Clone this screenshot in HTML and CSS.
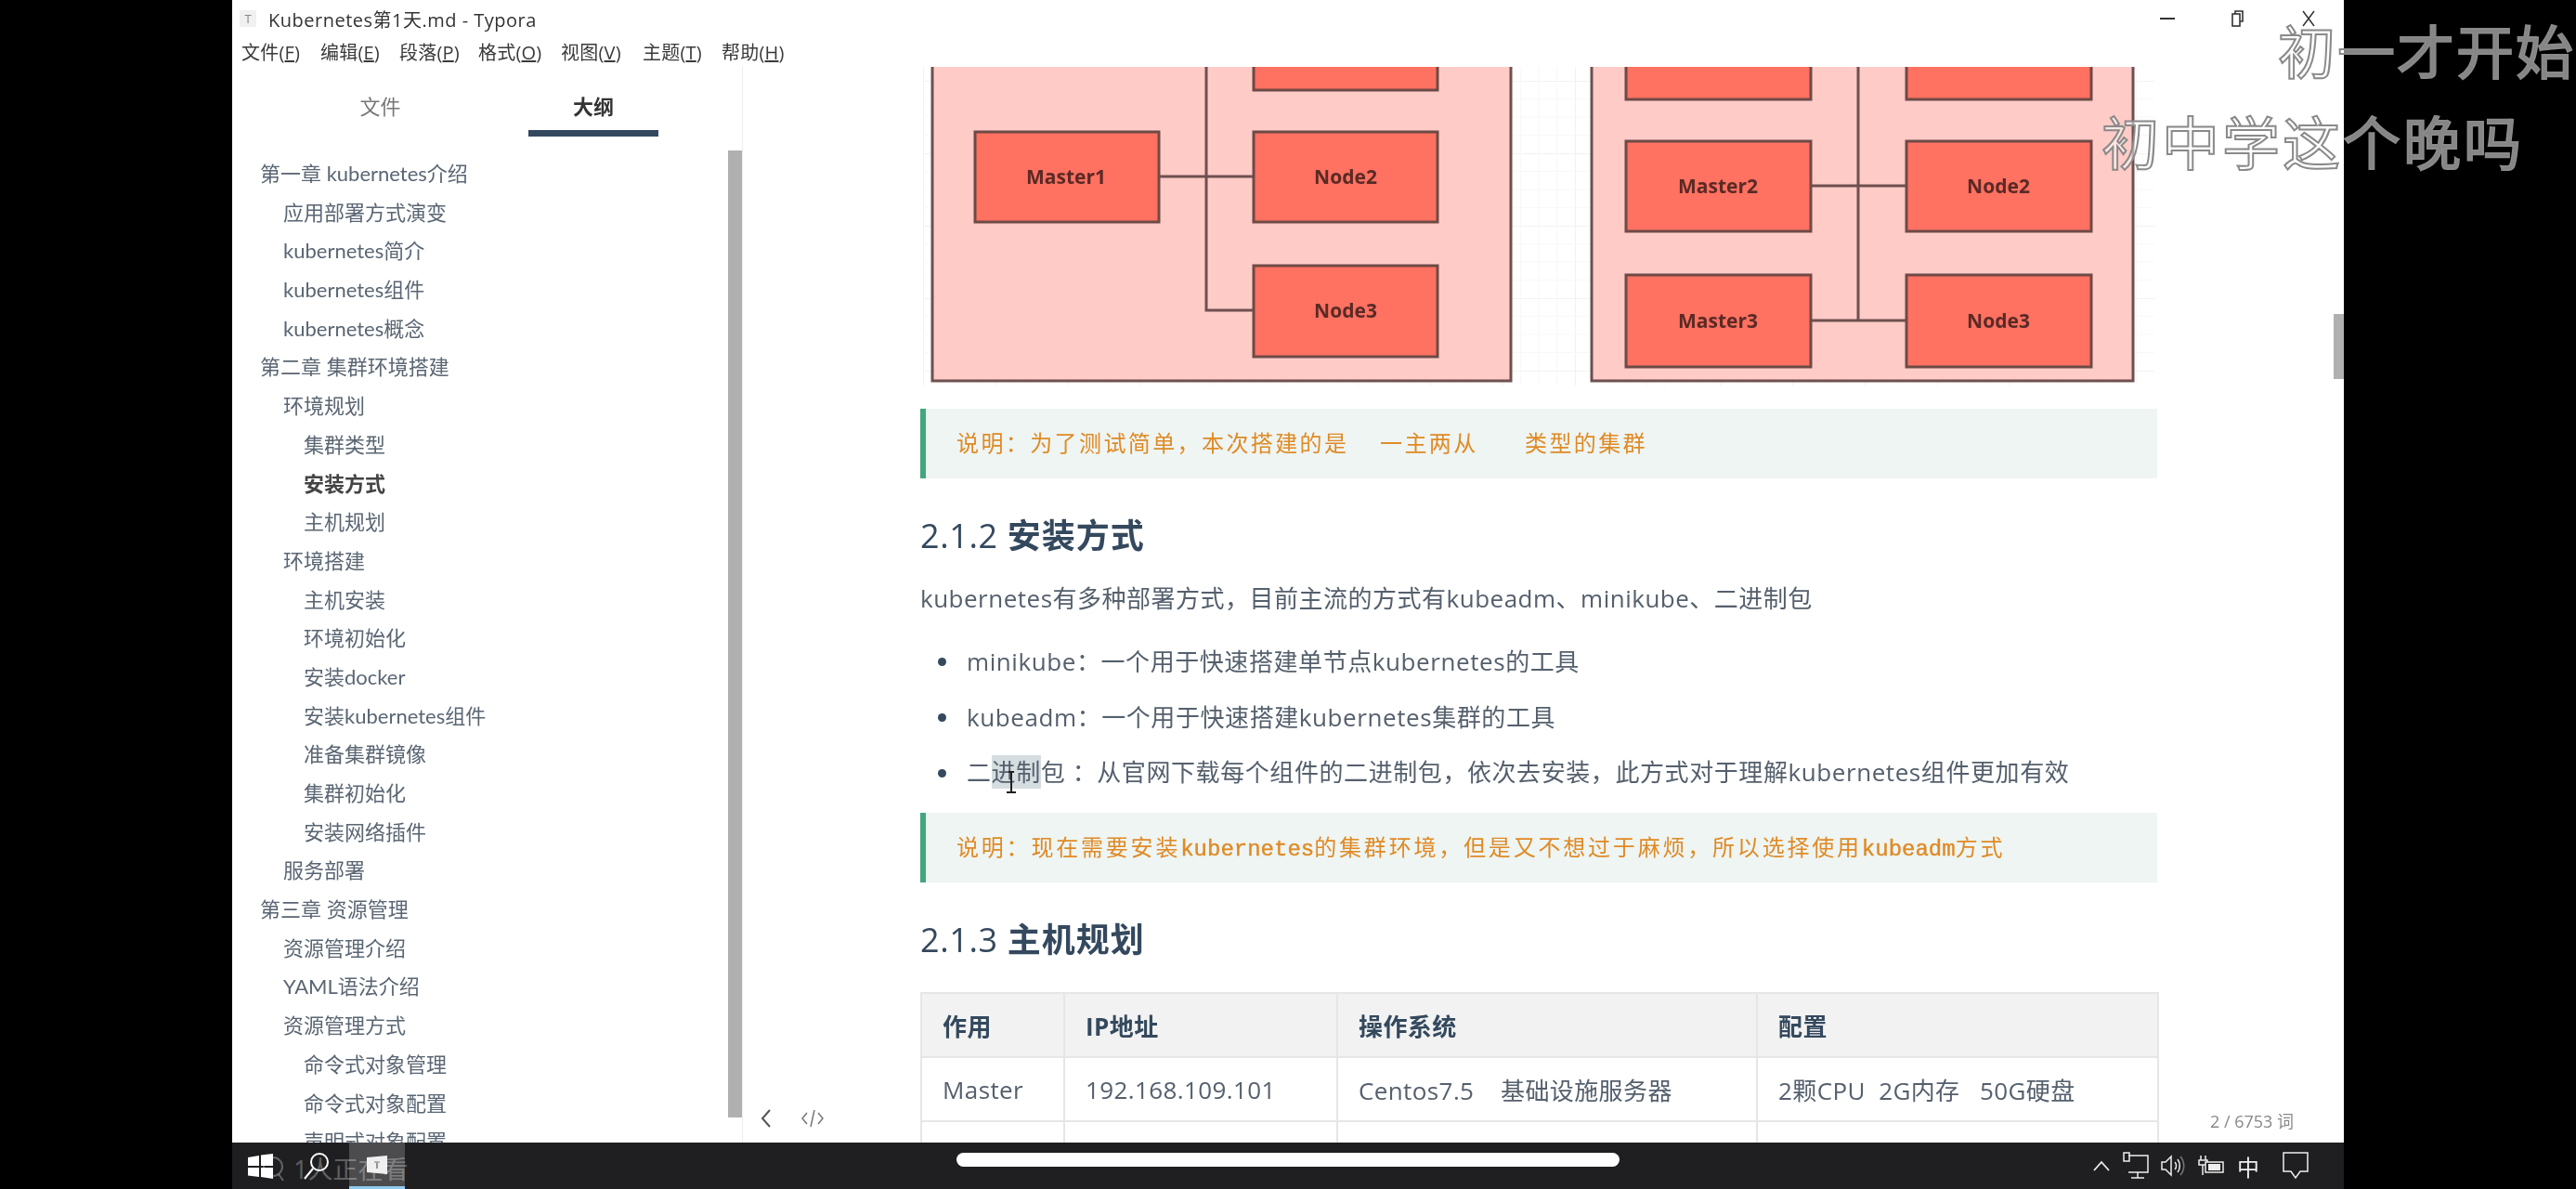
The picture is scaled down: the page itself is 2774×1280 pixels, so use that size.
FILE: index.html
```html
<!DOCTYPE html>
<html lang="zh-CN">
<head>
    <meta charset="UTF-8">
    <title>Kubernetes第1天.md - Typora</title>
    <link rel="stylesheet" href="styles.css">
</head>
<body>

<div class="screen">
    <div class="window">
        <div class="titlebar">
            <span class="app-icon">T</span>
            <span class="app-title">Kubernetes第1天.md - Typora</span>
            <div class="win-controls">
                <svg width="18" height="18" viewBox="0 0 18 18"><path d="M1 9h16" stroke="#333" stroke-width="2"/></svg>
                <svg width="18" height="18" viewBox="0 0 18 18" fill="none" stroke="#333" stroke-width="1.6"><path d="M6 4V1h8v11h-3"/><rect x="3" y="4" width="8" height="13"/></svg>
                <svg width="18" height="18" viewBox="0 0 18 18"><path d="M3 1l12 16M15 1L3 17" stroke="#333" stroke-width="1.5"/></svg>
            </div>
        </div>
        <div class="menubar">
            <span>文件(<u>F</u>)</span>
            <span>编辑(<u>E</u>)</span>
            <span>段落(<u>P</u>)</span>
            <span>格式(<u>O</u>)</span>
            <span class="menu-wide">视图(<u>V</u>)</span>
            <span>主题(<u>T</u>)</span>
            <span>帮助(<u>H</u>)</span>
        </div>

        <div class="main">
            <aside class="sidebar">
                <div class="tabs">
                    <div class="tab">文件</div>
                    <div class="tab tab-active">大纲</div>
                </div>
                <div class="outline">
                    <div class="l1">第一章 kubernetes介绍</div>
                    <div class="l2">应用部署方式演变</div>
                    <div class="l2">kubernetes简介</div>
                    <div class="l2">kubernetes组件</div>
                    <div class="l2">kubernetes概念</div>
                    <div class="l1">第二章 集群环境搭建</div>
                    <div class="l2">环境规划</div>
                    <div class="l3">集群类型</div>
                    <div class="l3 current">安装方式</div>
                    <div class="l3">主机规划</div>
                    <div class="l2">环境搭建</div>
                    <div class="l3">主机安装</div>
                    <div class="l3">环境初始化</div>
                    <div class="l3">安装docker</div>
                    <div class="l3">安装kubernetes组件</div>
                    <div class="l3">准备集群镜像</div>
                    <div class="l3">集群初始化</div>
                    <div class="l3">安装网络插件</div>
                    <div class="l2">服务部署</div>
                    <div class="l1">第三章 资源管理</div>
                    <div class="l2">资源管理介绍</div>
                    <div class="l2">YAML语法介绍</div>
                    <div class="l2">资源管理方式</div>
                    <div class="l3">命令式对象管理</div>
                    <div class="l3">命令式对象配置</div>
                    <div class="l3">声明式对象配置</div>
                </div>
                <div class="side-scroll"></div>
            </aside>

            <div class="content">
                <svg class="diagram" width="1332" height="345" viewBox="991 72 1332 345">
                    <defs>
                        <pattern id="grid" x="994" y="9" width="78" height="78" patternUnits="userSpaceOnUse">
                            <path d="M78 0H0V78" fill="none" stroke="#eeeeee" stroke-width="1.5"/>
                            <path d="M19.5 0V78M39 0V78M58.5 0V78M0 19.5H78M0 39H78M0 58.5H78" fill="none" stroke="#f8f8f8" stroke-width="1"/>
                        </pattern>
                    </defs>
                    <rect x="994" y="72" width="1326" height="343" fill="url(#grid)"/>

                    <g class="d-frame">
                        <rect x="1004" y="60" width="623" height="350"/>
                        <rect x="1714" y="60" width="583" height="350"/>
                    </g>
                    <g class="d-line">
                        <path d="M1299 60V334H1350M1248 190H1350"/>
                        <path d="M2001 60V345M1950 200H2053M1950 345H2053"/>
                    </g>
                    <g class="d-box">
                        <rect x="1350" y="40" width="198" height="57"/>
                        <rect x="1050" y="142" width="198" height="97"/>
                        <rect x="1350" y="142" width="198" height="97"/>
                        <rect x="1350" y="286" width="198" height="98"/>
                        <rect x="1751" y="40" width="199" height="67"/>
                        <rect x="2053" y="40" width="199" height="67"/>
                        <rect x="1751" y="152" width="199" height="97"/>
                        <rect x="2053" y="152" width="199" height="97"/>
                        <rect x="1751" y="296" width="199" height="99"/>
                        <rect x="2053" y="296" width="199" height="99"/>
                    </g>
                    <g class="d-text">
                        <text x="1148" y="198">Master1</text>
                        <text x="1449" y="198">Node2</text>
                        <text x="1449" y="342">Node3</text>
                        <text x="1850" y="208">Master2</text>
                        <text x="2152" y="208">Node2</text>
                        <text x="1850" y="353">Master3</text>
                        <text x="2152" y="353">Node3</text>
                    </g>
                </svg>

                <div class="note">说明：为了测试简单，本次搭建的是  一主两从   类型的集群</div>

                <h3>2.1.2 <b>安装方式</b></h3>
                <p class="para">kubernetes有多种部署方式，目前主流的方式有kubeadm、minikube、二进制包</p>
                <ul class="list">
                    <li>minikube：一个用于快速搭建单节点kubernetes的工具</li>
                    <li>kubeadm：一个用于快速搭建kubernetes集群的工具</li>
                    <li>二<span class="selected">进制</span>包 ：从官网下载每个组件的二进制包，依次去安装，此方式对于理解kubernetes组件更加有效</li>
                </ul>

                <div class="note note-wide">说明：现在需要安装<span class="mono">kubernetes</span>的集群环境，但是又不想过于麻烦，所以选择使用<span class="mono">kubeadm</span>方式</div>

                <h3>2.1.3 <b>主机规划</b></h3>
                <table class="hosts">
                    <colgroup>
                        <col class="c1"><col class="c2"><col class="c3"><col class="c4">
                    </colgroup>
                    <tr><th>作用</th><th>IP地址</th><th>操作系统</th><th>配置</th></tr>
                    <tr><td>Master</td><td>192.168.109.101</td><td>Centos7.5&nbsp;&nbsp;&nbsp; 基础设施服务器</td><td>2颗CPU&nbsp; 2G内存&nbsp;&nbsp; 50G硬盘</td></tr>
                    <tr><td>Node1</td><td>192.168.109.102</td><td>Centos7.5&nbsp;&nbsp;&nbsp; 基础设施服务器</td><td>2颗CPU&nbsp; 2G内存&nbsp;&nbsp; 50G硬盘</td></tr>
                </table>

                <svg class="ibeam" width="14" height="24" viewBox="0 0 14 24"><path d="M7 1V22M2 23h10M4 1h6" stroke="#222" stroke-width="2" fill="none"/></svg>
            </div>

            <div class="main-scroll"></div>
            <div class="foot-icons">
                <svg width="14" height="24" viewBox="0 0 14 24"><path d="M11 3L3 12l8 9" fill="none" stroke="#555" stroke-width="2"/></svg>
                <svg width="26" height="24" viewBox="0 0 26 24" fill="none" stroke="#777" stroke-width="1.5"><path d="M7 6l-5 6 5 6M19 6l5 6-5 6M15 3l-4 18"/></svg>
            </div>
            <div class="wordcount">2 / 6753 词</div>
        </div>

        <div class="taskbar">
            <svg class="win-logo" width="27" height="27" viewBox="0 0 27 27"><path d="M0 4l12-2v11H0zM14 1.600L27 0v13H14zM0 15h12v10L0 23.500zM14 15h13v12l-13-2z" fill="#fff"/></svg>
            <svg class="search" width="28" height="29" viewBox="0 0 28 29" fill="none" stroke="#fff" stroke-width="2"><circle cx="17" cy="10" r="9"/><path d="M10 17L1 28"/></svg>
            <div class="task-btn">
                <svg width="24" height="20" viewBox="0 0 24 20"><path d="M1 2l22-2v20L1 18z" fill="#eeeeee"/><path d="M9 7h6M12 7v7" stroke="#777" stroke-width="1.500"/></svg>
            </div>
            <div class="tray">
                <svg width="20" height="14" viewBox="0 0 20 14"><path d="M2 12l8-9 8 9" fill="none" stroke="#eee" stroke-width="1.800"/></svg>
                <svg width="28" height="30" viewBox="0 0 28 30" fill="none" stroke="#eee" stroke-width="1.500"><path d="M6 4h21v18H6M16 22v6M9 28h14"/><rect x="1" y="1" width="6" height="9"/></svg>
                <svg width="26" height="26" viewBox="0 0 26 26" fill="none" stroke="#eee" stroke-width="1.500"><path d="M1 9h4l6-6v20l-6-6H1zM15 9c2 2 2 6 0 8M18 6c3 4 3 10 0 14"/><path d="M21 3c5 6 5 14 0 20" stroke="#777"/></svg>
                <svg width="30" height="24" viewBox="0 0 30 24" fill="none" stroke="#eee" stroke-width="1.500"><path d="M4 1v5M9 1v5M2 6h9v5H2zM6 11v11"/><rect x="9" y="8" width="19" height="11" fill="#1f1f21"/><rect x="12" y="10" width="13" height="7" fill="#eee" stroke="none"/></svg>
                <span class="ime">中</span>
                <svg width="28" height="30" viewBox="0 0 28 30" fill="none" stroke="#eee" stroke-width="1.500"><path d="M1 1h26v20h-8l-5 7-5-7H1z"/></svg>
            </div>
        </div>
    </div>

    <div class="watching">
        <svg width="24" height="30" viewBox="0 0 24 30" fill="none" stroke="rgba(255,255,255,0.3)" stroke-width="2"><circle cx="12" cy="13" r="10"/><path d="M18 21l5 7"/></svg>
        <span>1人正在看</span>
    </div>
    <div class="pill"></div>
    <div class="barrage barrage-one">初一才开始</div>
    <div class="barrage barrage-two">初中学这个晚吗</div>
</div>

</body>
</html>
```

FILE: styles.css
```css
* { margin: 0; padding: 0; box-sizing: border-box; }
html, body { background: #000; }
body { font-family: 'Open Sans', 'Noto Sans CJK SC', sans-serif; color: #55606d; }

.screen {
    position: relative; width: 2774px; height: 1280px;
    padding-left: 250px; overflow: hidden; background: #000;
}
.window {
    width: 2274px; height: 1280px; display: flex; flex-direction: column;
    background: #fff; filter: blur(0.5px);
}

/* title + menu */
.titlebar { height: 40px; display: flex; align-items: center; padding-left: 8px; color: #333; }
.app-icon {
    width: 18px; height: 18px; margin-right: 13px; background: #f0f0f0; color: #888;
    font-size: 13px; line-height: 18px; text-align: center;
}
.app-title { font-size: 20px; letter-spacing: 0.5px; }
.win-controls { margin-left: auto; display: flex; gap: 58px; padding-right: 29px; }
.menubar { height: 32px; display: flex; gap: 21px; padding-left: 10px; font-size: 20px; line-height: 34px; color: #3a3a3a; }
.menubar span { width: 64px; white-space: nowrap; letter-spacing: 0.2px; }
.menubar .menu-wide { margin-left: 4px; margin-right: 3px; }

.main { position: relative; flex: 1; display: flex; overflow: hidden; }

/* sidebar */
.sidebar {
    position: relative; width: 550px; flex-shrink: 0;
    border-right: 1px solid #eee; overflow: hidden;
}
.tabs { height: 75px; display: flex; }
.tab { width: 319px; padding-top: 26px; text-align: center; font-size: 22px; line-height: 32px; color: #777; }
.tab-active { position: relative; color: #333; font-weight: 700; width: 140px; }
.tab-active::after {
    content: ''; position: absolute; left: 0; right: 0; bottom: 0;
    height: 7px; background: #34495e;
}
.outline { padding-top: 19px; font-family: Lato, 'Noto Sans CJK SC', sans-serif; font-size: 22px; color: #5a6673; }
.outline div { height: 41.7px; line-height: 41.7px; white-space: nowrap; }
.l1 { padding-left: 30px; }
.l2 { padding-left: 55px; }
.l3 { padding-left: 77px; }
.outline .current { font-weight: 700; color: #444; }
.side-scroll { position: absolute; right: 0; top: 90px; width: 15px; height: 1041px; background: #b0b0b0; }

/* editor */
.content { position: relative; flex: 1; padding-left: 191px; width: 1724px; overflow: hidden; }
.content > * { width: 1332px; }
.diagram { display: block; }
.d-frame rect { fill: #ffcbc7; stroke: #6e5050; stroke-width: 3; }
.d-line path { fill: none; stroke: #6e5050; stroke-width: 3; }
.d-box rect { fill: #ff7161; stroke: #6e4a46; stroke-width: 3; }
.d-text text { font-size: 21px; font-weight: 700; fill: #5a2a26; text-anchor: middle; }

.note {
    height: 75px; margin-top: 23px; padding-left: 33px; line-height: 79px;
    background: #eef5f3; border-left: 6px solid #42a77f;
    font-family: 'Liberation Mono', 'Noto Sans CJK SC', monospace;
    font-size: 24px; letter-spacing: 2.4px; color: #e08a25; white-space: pre;
}
.note-wide { letter-spacing: 2.8px; }
.mono { letter-spacing: 0; -webkit-text-stroke: 0.4px #e08a25; }

h3 {
    height: 50px; margin-top: 35px; line-height: 53px;
    font-size: 36px; font-weight: 400; color: #34495e; letter-spacing: 0.6px;
}
h3 b { font-weight: 700; letter-spacing: 1px; }
.para { height: 40px; margin-top: 23px; line-height: 42px; font-size: 26px; letter-spacing: 0.5px; white-space: nowrap; }
.list { margin-top: 29px; list-style: none; font-size: 26px; letter-spacing: 0.58px; }
.list li { position: relative; height: 40px; margin-bottom: 20px; padding-left: 50px; line-height: 40px; white-space: nowrap; }
.list li:last-child { margin-bottom: 0; line-height: 38px; }
.list li::before {
    content: ''; position: absolute; left: 19px; top: 16px;
    width: 9px; height: 9px; border-radius: 50%; background: #34495e;
}
.selected { background: #d5dde0; }
.ibeam { position: absolute; left: 282px; top: 758px; width: 14px; }

.hosts { margin-top: 33px; border-collapse: collapse; table-layout: fixed; font-size: 26px; letter-spacing: 0.4px; }
.hosts .c1 { width: 154px; }
.hosts .c2 { width: 294px; }
.hosts .c3 { width: 452px; }
.hosts .c4 { width: 432px; }
.hosts th, .hosts td {
    height: 69px; padding-left: 22px; text-align: left; white-space: nowrap;
    border: 2px solid #e6e6e6;
}
.hosts th { background: #f2f2f2; color: #34495e; font-weight: 700; }

.main-scroll { position: absolute; right: 0; top: 266px; width: 11px; height: 70px; background: #b0b0b0; }
.foot-icons { position: absolute; left: 568px; top: 1120px; display: flex; gap: 30px; align-items: center; }
.wordcount { position: absolute; left: 2130px; top: 1121px; font-size: 18px; color: #888; }

/* taskbar */
.taskbar { height: 50px; flex-shrink: 0; display: flex; align-items: center; background: #1f1f21; padding-left: 17px; }
.win-logo { margin-right: 33px; }
.search { margin-right: 21px; }
.task-btn {
    width: 60px; height: 50px; display: flex; align-items: center; justify-content: center;
    background: #4c4c4e; border-bottom: 3px solid #8fcbf0;
}
.tray { margin-left: auto; height: 50px; padding-right: 38px; display: flex; align-items: center; gap: 13px; }
.ime { margin-right: 12px; font-size: 24px; color: #eee; }

.watching {
    position: absolute; left: 282px; top: 1238px; display: flex; align-items: center; gap: 10px;
    font-size: 27px; color: rgba(255, 255, 255, 0.3);
}
.pill { position: absolute; left: 1030px; top: 1241px; width: 714px; height: 15px; border-radius: 8px; background: #fff; }
.barrage {
    position: absolute; font-family: 'Noto Sans CJK SC', sans-serif; font-size: 62px; line-height: 70px;
    letter-spacing: 2px; white-space: nowrap; color: rgba(255, 255, 255, 0.52);
    -webkit-text-stroke: 2px #8a8a8a;
}
.barrage-one { left: 2453px; top: 18px; }
.barrage-two { left: 2263px; top: 116px; letter-spacing: 3px; }
```
